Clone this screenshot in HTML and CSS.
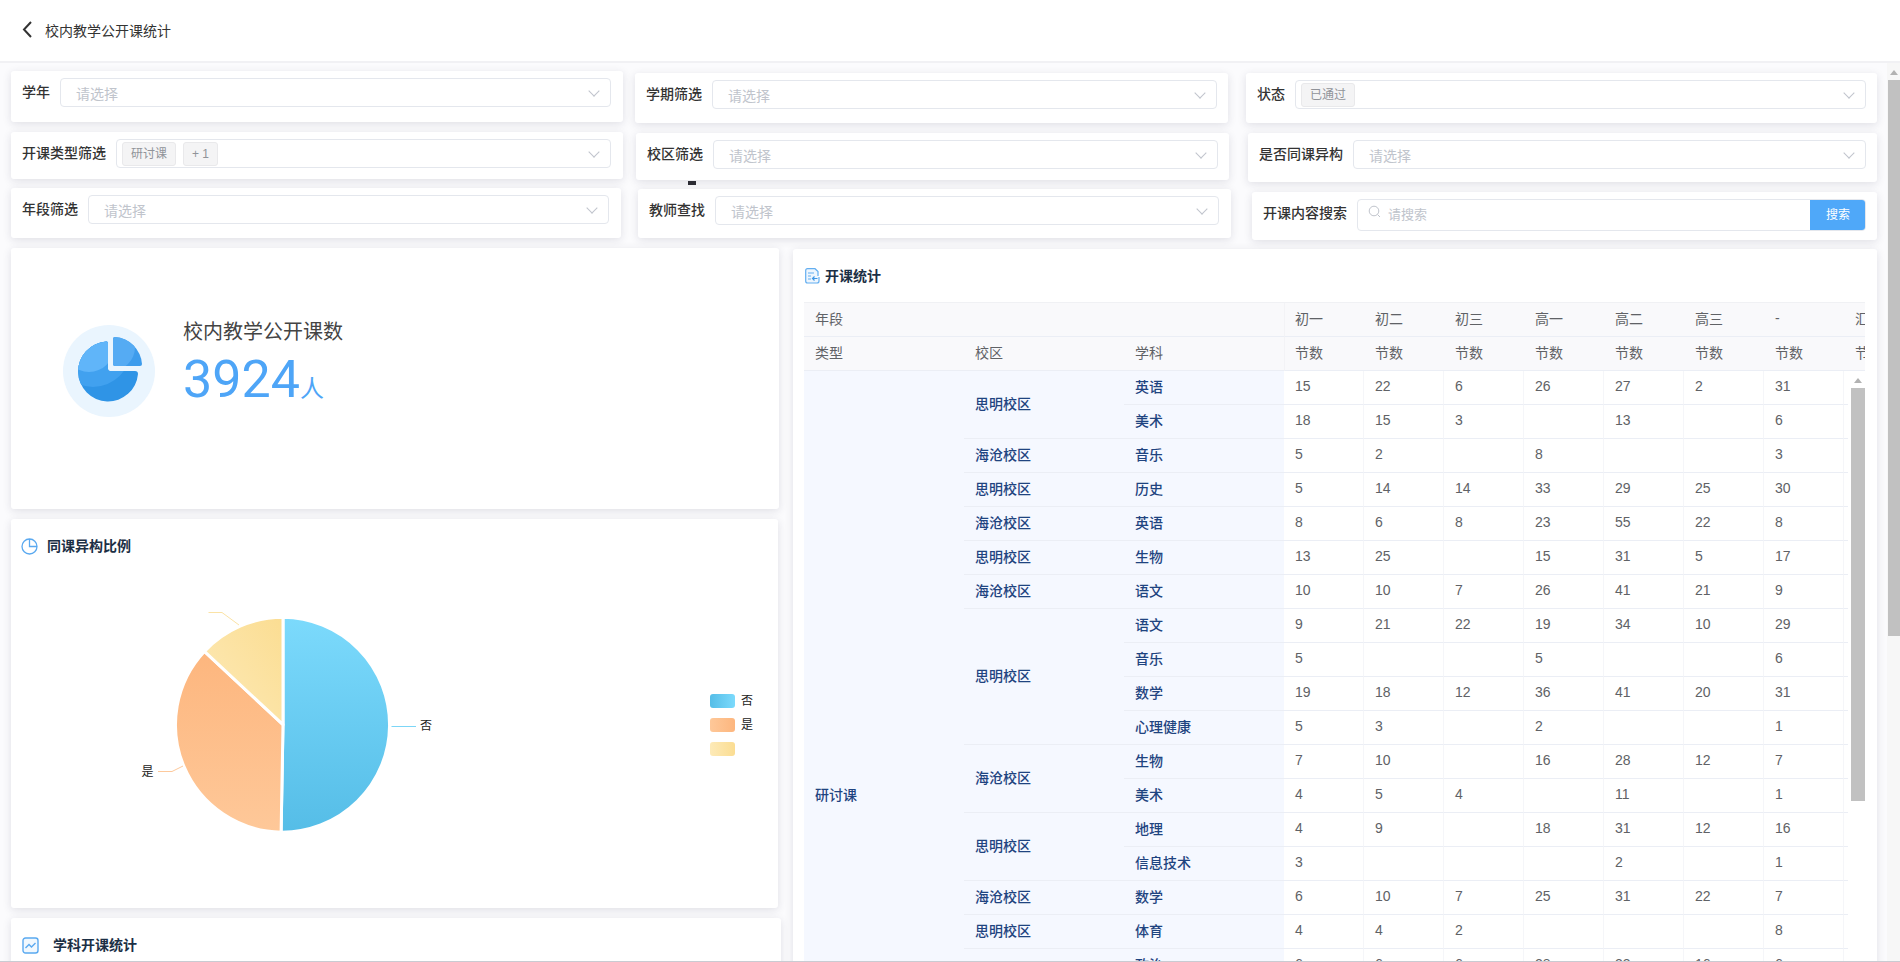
FILE: index.html
```html
<!DOCTYPE html>
<html lang="zh-CN">
<head>
    <meta charset="UTF-8">
    <title>校内教学公开课统计</title>
    <link rel="stylesheet" href="styles.css">
</head>
<body>
<div class="page">
    <div class="top-bar">
        <svg class="back-icon" width="10" height="17" viewBox="0 0 10 17"><path d="M9 1 L2 8.5 L9 16" fill="none" stroke="#333" stroke-width="2"/></svg>
        <span>校内教学公开课统计</span>
    </div>
    <div class="page-body">
        <div class="content">
            <!-- 筛选 -->
            <div class="filters">
                <div class="col col-1">
                    <div class="filter">
                        <span class="filter-label">学年</span>
                        <div class="select"><span class="placeholder">请选择</span><i class="arrow"></i></div>
                    </div>
                    <div class="filter">
                        <span class="filter-label">开课类型筛选</span>
                        <div class="select"><span class="tag">研讨课</span><span class="tag">+ 1</span><i class="arrow"></i></div>
                    </div>
                    <div class="filter">
                        <span class="filter-label">年段筛选</span>
                        <div class="select"><span class="placeholder">请选择</span><i class="arrow"></i></div>
                    </div>
                </div>
                <div class="col col-2">
                    <div class="filter">
                        <span class="filter-label">学期筛选</span>
                        <div class="select"><span class="placeholder">请选择</span><i class="arrow"></i></div>
                    </div>
                    <div class="filter">
                        <span class="filter-label">校区筛选</span>
                        <div class="select"><span class="placeholder">请选择</span><i class="arrow"></i></div>
                    </div>
                    <div class="filter">
                        <span class="filter-label">教师查找</span>
                        <div class="select"><span class="placeholder">请选择</span><i class="arrow"></i></div>
                    </div>
                </div>
                <div class="col col-3">
                    <div class="filter">
                        <span class="filter-label">状态</span>
                        <div class="select"><span class="tag">已通过</span><i class="arrow"></i></div>
                    </div>
                    <div class="filter">
                        <span class="filter-label">是否同课异构</span>
                        <div class="select"><span class="placeholder">请选择</span><i class="arrow"></i></div>
                    </div>
                    <div class="filter">
                        <span class="filter-label">开课内容搜索</span>
                        <div class="search">
                            <svg class="search-icon" width="13" height="13" viewBox="0 0 13 13"><circle cx="6" cy="6" r="4.8" fill="none" stroke="#c0c4cc"/><path d="M9.5 9.5 L12 12" stroke="#c0c4cc"/></svg>
                            <span class="search-text">请搜索</span>
                            <div class="search-btn">搜索</div>
                        </div>
                    </div>
                </div>
            </div>

            <div class="main">
                <div class="left">
                    <div class="card stat-card">
                        <svg class="stat-icon" width="92" height="92" viewBox="0 0 92 92">
                            <defs>
                                <clipPath id="bigPie"><path d="M43 16.5 A30 30 0 1 0 75 49 Q75 46 72 46 H47 Q45 46 45 44 V18 Q45 16 43 16.5 Z"/></clipPath>
                                <clipPath id="smallPie"><path d="M50 14 Q50 12 52 12 A29 29 0 0 1 79 39 Q79 41 77 41 H52 Q50 41 50 39 Z"/></clipPath>
                            </defs>
                            <circle cx="46" cy="46" r="46" fill="#eaf5fe"/>
                            <g clip-path="url(#bigPie)">
                                <rect x="10" y="10" width="70" height="70" fill="#2f94e6"/>
                                <circle cx="30" cy="24" r="38" fill="#41a1ef"/>
                                <circle cx="26" cy="22" r="25" fill="#60b5f9"/>
                            </g>
                            <g clip-path="url(#smallPie)">
                                <rect x="48" y="10" width="34" height="34" fill="#3d9cec"/>
                                <circle cx="48" cy="22" r="24" fill="#55abf3"/>
                            </g>
                        </svg>
                        <div class="stat-text">
                            <div class="stat-title">校内教学公开课数</div>
                            <div class="stat-num">3924<span class="stat-unit">人</span></div>
                        </div>
                    </div>

                    <div class="card pie-card">
                        <div class="card-title">
                            <svg width="17" height="17" viewBox="0 0 17 17"><circle cx="8.5" cy="8.5" r="7.5" fill="none" stroke="#5aa9f0" stroke-width="1.3"/><path d="M8.5 1 V8.5 H16" fill="none" stroke="#5aa9f0" stroke-width="1.3"/></svg>
                            <span>同课异构比例</span>
                        </div>
                        <svg class="pie-chart" width="767" height="335" viewBox="11 573 767 335">
                            <defs>
                                <linearGradient id="gBlue" x1="0" y1="0" x2="0" y2="1"><stop offset="0" stop-color="#7cdafc"/><stop offset="1" stop-color="#55bde7"/></linearGradient>
                                <linearGradient id="gOrange" x1="0" y1="0" x2="0" y2="1"><stop offset="0" stop-color="#fdb67e"/><stop offset="1" stop-color="#fec899"/></linearGradient>
                                <linearGradient id="gYellow" x1="1" y1="0" x2="0" y2="1"><stop offset="0" stop-color="#fbdd92"/><stop offset="1" stop-color="#fdeab8"/></linearGradient>
                                <linearGradient id="lBlue"><stop offset="0" stop-color="#55bde7"/><stop offset="1" stop-color="#7cdafc"/></linearGradient>
                                <linearGradient id="lOrange"><stop offset="0" stop-color="#fec899"/><stop offset="1" stop-color="#fdb67e"/></linearGradient>
                                <linearGradient id="lYellow"><stop offset="0" stop-color="#fdeab8"/><stop offset="1" stop-color="#fbdd92"/></linearGradient>
                            </defs>
                            <g stroke="#fff" stroke-width="3" stroke-linejoin="round">
                                <path d="M283 724.7 L283 617.2 A107.5 107.5 0 1 1 281.1 832.2 Z" fill="url(#gBlue)"/>
                                <path d="M283 724.7 L281.1 832.2 A107.5 107.5 0 0 1 204.4 651.4 Z" fill="url(#gOrange)"/>
                                <path d="M283 724.7 L204.4 651.4 A107.5 107.5 0 0 1 283 617.2 Z" fill="url(#gYellow)"/>
                            </g>
                            <g fill="none" stroke-width="1">
                                <path d="M391.5 726.5 H416" stroke="#7cd6f7"/>
                                <path d="M158 771.5 H172 L183 766" stroke="#fdc99c"/>
                                <path d="M208.5 612.5 H222 L239 625" stroke="#fbe3a6"/>
                            </g>
                            <text class="pie-label" x="420" y="730">否</text>
                            <text class="pie-label" x="141.5" y="776">是</text>
                            <rect x="710" y="694" width="25" height="14" rx="3" fill="url(#lBlue)"/>
                            <rect x="710" y="718" width="25" height="14" rx="3" fill="url(#lOrange)"/>
                            <rect x="710" y="742" width="25" height="14" rx="3" fill="url(#lYellow)"/>
                            <text class="pie-label" x="741" y="705">否</text>
                            <text class="pie-label" x="741" y="729">是</text>
                        </svg>
                    </div>

                    <div class="card subject-card">
                        <div class="card-title">
                            <svg width="17" height="17" viewBox="0 0 17 17"><rect x="1" y="1" width="15" height="15" rx="2.5" fill="#f1f8fe" stroke="#5aa9f0" stroke-width="1.4"/><path d="M3.5 11 L7 7.5 L9.5 10 L13.5 6" fill="none" stroke="#5aa9f0" stroke-width="1.4"/></svg>
                            <span>学科开课统计</span>
                        </div>
                    </div>
                </div>

                <div class="card table-card">
                    <div class="card-title">
                        <svg width="15" height="16" viewBox="0 0 15 16"><path d="M2.5 .7 H10 L13 3.5 V8 M2.5 .7 Q.7 .7 .7 2.5 V13 Q.7 15 2.5 15 H12 Q14 15 14 13 V9" fill="#eef6fe" stroke="#63aef0" stroke-width="1.2"/><path d="M3 5 H9 M3 8 H6 M3 11 H6" stroke="#63aef0" stroke-width="1.1"/><path d="M12.5 10.5 H7.5 M9.5 8.5 L7.5 10.5 L9.5 12.5" fill="none" stroke="#3f97e6" stroke-width="1.2"/></svg>
                        <span>开课统计</span>
                    </div>
                    <div class="table-head">
                        <table>
                            <colgroup><col class="w160"><col class="w160"><col class="w160"><col class="w80"><col class="w80"><col class="w80"><col class="w80"><col class="w80"><col class="w80"><col class="w80"><col class="w80"></colgroup>
                            <tr><th colspan="3">年段</th><th class="first">初一</th><th>初二</th><th>初三</th><th>高一</th><th>高二</th><th>高三</th><th>-</th><th>汇总</th></tr>
                            <tr><th>类型</th><th>校区</th><th>学科</th><th class="first">节数</th><th>节数</th><th>节数</th><th>节数</th><th>节数</th><th>节数</th><th>节数</th><th>节数</th></tr>
                        </table>
                    </div>
                    <div class="table-body">
                        <div class="table-scroll">
                            <table>
                                <colgroup><col class="w160"><col class="w160"><col class="w160"><col class="w80"><col class="w80"><col class="w80"><col class="w80"><col class="w80"><col class="w80"><col class="w80"><col class="w80"></colgroup>
                                <tr><td class="fixed type" rowspan="18">研讨课</td><td class="fixed" rowspan="2">思明校区</td><td class="fixed">英语</td><td>15</td><td>22</td><td>6</td><td>26</td><td>27</td><td>2</td><td>31</td><td></td></tr>
                                <tr><td class="fixed">美术</td><td>18</td><td>15</td><td>3</td><td></td><td>13</td><td></td><td>6</td><td></td></tr>
                                <tr><td class="fixed">海沧校区</td><td class="fixed">音乐</td><td>5</td><td>2</td><td></td><td>8</td><td></td><td></td><td>3</td><td></td></tr>
                                <tr><td class="fixed">思明校区</td><td class="fixed">历史</td><td>5</td><td>14</td><td>14</td><td>33</td><td>29</td><td>25</td><td>30</td><td></td></tr>
                                <tr><td class="fixed">海沧校区</td><td class="fixed">英语</td><td>8</td><td>6</td><td>8</td><td>23</td><td>55</td><td>22</td><td>8</td><td></td></tr>
                                <tr><td class="fixed">思明校区</td><td class="fixed">生物</td><td>13</td><td>25</td><td></td><td>15</td><td>31</td><td>5</td><td>17</td><td></td></tr>
                                <tr><td class="fixed">海沧校区</td><td class="fixed">语文</td><td>10</td><td>10</td><td>7</td><td>26</td><td>41</td><td>21</td><td>9</td><td></td></tr>
                                <tr><td class="fixed" rowspan="4">思明校区</td><td class="fixed">语文</td><td>9</td><td>21</td><td>22</td><td>19</td><td>34</td><td>10</td><td>29</td><td></td></tr>
                                <tr><td class="fixed">音乐</td><td>5</td><td></td><td></td><td>5</td><td></td><td></td><td>6</td><td></td></tr>
                                <tr><td class="fixed">数学</td><td>19</td><td>18</td><td>12</td><td>36</td><td>41</td><td>20</td><td>31</td><td></td></tr>
                                <tr><td class="fixed">心理健康</td><td>5</td><td>3</td><td></td><td>2</td><td></td><td></td><td>1</td><td></td></tr>
                                <tr><td class="fixed" rowspan="2">海沧校区</td><td class="fixed">生物</td><td>7</td><td>10</td><td></td><td>16</td><td>28</td><td>12</td><td>7</td><td></td></tr>
                                <tr><td class="fixed">美术</td><td>4</td><td>5</td><td>4</td><td></td><td>11</td><td></td><td>1</td><td></td></tr>
                                <tr><td class="fixed" rowspan="2">思明校区</td><td class="fixed">地理</td><td>4</td><td>9</td><td></td><td>18</td><td>31</td><td>12</td><td>16</td><td></td></tr>
                                <tr><td class="fixed">信息技术</td><td>3</td><td></td><td></td><td></td><td>2</td><td></td><td>1</td><td></td></tr>
                                <tr><td class="fixed">海沧校区</td><td class="fixed">数学</td><td>6</td><td>10</td><td>7</td><td>25</td><td>31</td><td>22</td><td>7</td><td></td></tr>
                                <tr><td class="fixed">思明校区</td><td class="fixed">体育</td><td>4</td><td>4</td><td>2</td><td></td><td></td><td></td><td>8</td><td></td></tr>
                                <tr><td class="fixed"></td><td class="fixed">政治</td><td>6</td><td>6</td><td>6</td><td>28</td><td>33</td><td>16</td><td>6</td><td></td></tr>
                            </table>
                        </div>
                        <div class="inner-scrollbar"><i class="bar-up"></i><div class="inner-thumb"></div></div>
                    </div>
                </div>
            </div>
        </div>
        <div class="page-scrollbar"><i class="bar-up"></i><div class="page-thumb"></div></div>
    </div>
    <div class="bottom-line"></div>
    <div class="stray-mark"></div>
</div>
</body>
</html>
```

FILE: styles.css
```css
*{
    box-sizing: border-box;
}
html,body{
    margin: 0;
    height: 100%;
    overflow: hidden;
}
body{
    font-family: "Liberation Sans", "Noto Sans CJK SC", sans-serif;
    font-size: 14px;
    color: #333;
    background-color: #fff;
}
.page{
    position: relative;
    display: flex;
    flex-direction: column;
    height: 962px;
}
.top-bar{
    display: flex;
    align-items: center;
    flex: none;
    height: 63px;
    padding: 0 0 2px 22px;
    border-bottom: 2px solid #f1f1f4;
    background-color: #fff;
}
.back-icon{
    margin-right: 13px;
}
.page-body{
    display: flex;
    flex: none;
    height: 898px;
    overflow: hidden;
}
.content{
    flex: none;
    width: 1887px;
    padding: 8px 0 0 11px;
    background-color: #fbfbfd;
}
.page-scrollbar{
    flex: none;
    width: 13px;
    padding-left: 1px;
    background-color: #f7f7f7;
}
.bar-up{
    display: block;
    width: 0;
    height: 0;
    border-left: 4px solid transparent;
    border-right: 4px solid transparent;
    border-bottom: 5px solid #b2b2b2;
}
.page-scrollbar .bar-up{
    margin: 7px auto 5px;
}
.page-thumb{
    height: 556px;
    background-color: #c1c1c1;
}
.bottom-line{
    flex: none;
    height: 1px;
    background-color: #c9cbd2;
}
.stray-mark{
    position: absolute;
    left: 688px;
    top: 181px;
    width: 8px;
    height: 4px;
    background-color: #2b2b33;
}

/* 筛选 */
.filters{
    display: flex;
    height: 169px;
}
.col{
    display: flex;
    flex-direction: column;
    flex: none;
}
.col-1{
    width: 612px;
}
.col-2{
    width: 596px;
    margin: 2px 0 0 12px;
}
.col-3{
    width: 632px;
    margin: 2px 0 0 14px;
    align-items: flex-end;
}
.filter{
    display: flex;
    align-items: flex-start;
    padding: 7px 12px 0 11px;
    background-color: #fff;
    border-radius: 3px;
    box-shadow: 0 2px 8px rgba(40,40,70,.13);
}
.col-1 .filter:nth-child(1){ height: 51px; width: 612px; }
.col-1 .filter:nth-child(2){ height: 47px; width: 612px; margin-top: 10px; }
.col-1 .filter:nth-child(3){ height: 50px; width: 610px; margin-top: 9px; }
.col-2 .filter{ width: 593px; }
.col-2 .filter:nth-child(1){ height: 50px; padding-right: 11px; }
.col-2 .filter:nth-child(2){ height: 47px; margin: 10px 0 0 1px; padding-right: 11px; }
.col-2 .filter:nth-child(3){ height: 49px; margin: 9px 0 0 3px; }
.col-3 .filter{ padding-right: 11px; }
.col-3 .filter:nth-child(1){ height: 50px; width: 631px; }
.col-3 .filter:nth-child(2){ height: 49px; width: 629px; margin-top: 10px; }
.col-3 .filter:nth-child(3){ height: 48px; width: 625px; margin-top: 10px; }
.filter-label{
    flex: none;
    margin-right: 10px;
    line-height: 29px;
    font-weight: 500;
    color: #333;
}
.select{
    position: relative;
    display: flex;
    align-items: center;
    flex: 1;
    height: 29px;
    padding-left: 5px;
    background-color: #fff;
    border: 1px solid #e4e7ed;
    border-radius: 4px;
}
.placeholder{
    margin-left: 10px;
    color: #c0c4cc;
}
.tag{
    height: 24px;
    line-height: 22px;
    padding: 0 8px;
    margin-right: 7px;
    font-size: 12px;
    color: #909399;
    background-color: #f4f4f5;
    border: 1px solid #e9e9eb;
    border-radius: 3px;
}
.arrow{
    position: absolute;
    right: 12px;
    top: 8px;
    width: 8px;
    height: 8px;
    border-right: 1px solid #c0c4cc;
    border-bottom: 1px solid #c0c4cc;
    transform: rotate(45deg);
}
.search{
    display: flex;
    flex: 1;
    height: 32px;
    padding-left: 10px;
    border: 1px solid #e4e7ed;
    border-radius: 4px;
    overflow: hidden;
}
.search-icon{
    margin: 5px 7px 0 0;
}
.search-text{
    flex: 1;
    font-size: 13px;
    line-height: 29px;
    color: #c0c4cc;
}
.search-btn{
    width: 56px;
    margin: -1px -1px -1px 0;
    font-size: 12px;
    line-height: 32px;
    text-align: center;
    color: #fff;
    background-color: #4fa8f9;
}

/* 主体 */
.main{
    display: flex;
    margin-top: 8px;
}
.left{
    flex: none;
    width: 768px;
}
.card{
    background-color: #fff;
    border-radius: 3px;
    box-shadow: 0 2px 8px rgba(40,40,70,.13);
}
.stat-card{
    display: flex;
    align-items: flex-start;
    height: 261px;
    padding: 70px 0 0 52px;
}
.stat-icon{
    margin: 7px 28px 0 0;
}
.stat-title{
    font-size: 20px;
    line-height: 28px;
    color: #444;
}
.stat-num{
    margin-top: 6px;
    font-family: Roboto, "Noto Sans CJK SC", sans-serif;
    font-size: 52px;
    font-weight: 400;
    line-height: 56px;
    color: #4ea5f7;
}
.stat-unit{
    font-size: 24px;
    font-weight: 400;
}
.card-title{
    display: flex;
    align-items: center;
    height: 18px;
    font-weight: 700;
    color: #1c2f45;
}
.card-title span{
    margin-top: -2px;
}
.pie-card{
    width: 767px;
    height: 389px;
    margin-top: 10px;
    padding-top: 18px;
}
.pie-card .card-title{
    padding-left: 10px;
}
.pie-card .card-title svg{
    margin-right: 9px;
}
.pie-chart{
    display: block;
    margin-top: 18px;
}
.pie-label{
    font-size: 12px;
    fill: #222;
}
.subject-card{
    width: 770px;
    height: 120px;
    margin-top: 10px;
    padding-top: 18px;
}
.subject-card .card-title{
    padding-left: 11px;
}
.subject-card .card-title svg{
    margin-right: 14px;
}
.table-card{
    flex: none;
    width: 1084px;
    height: 760px;
    margin: 1px 0 0 14px;
    padding: 18px 12px 0 11px;
}
.table-card .card-title{
    margin-bottom: 17px;
}
.table-card .card-title svg{
    margin-left: 1px;
    margin-right: 5px;
}

/* 表格 */
table{
    width: 1120px;
    table-layout: fixed;
    border-collapse: separate;
    border-spacing: 0;
}
.w160{
    width: 160px;
}
.w80{
    width: 80px;
}
.table-head{
    overflow: hidden;
    background-color: #f9f9fb;
    border-top: 1px solid #f0f1f4;
    margin-top: 0;
    height: 69px;
}
th{
    height: 34px;
    padding: 0 11px 4px;
    font-weight: 400;
    text-align: left;
    color: #606266;
    background-color: #f9f9fb;
    border-bottom: 1px solid #ebeef5;
    white-space: nowrap;
}
th.first{
    padding-left: 10px;
    border-left: 1px solid #f3f3f6;
}
.table-body{
    display: flex;
    height: 680px;
}
.table-scroll{
    flex: none;
    width: 1044px;
    overflow: hidden;
}
td{
    height: 34px;
    padding: 0 11px 4px;
    color: #606266;
    border-bottom: 1px solid #ebeef5;
    border-right: 1px solid #f5f6f9;
    white-space: nowrap;
}
td.fixed{
    font-weight: 500;
    color: #1f4480;
    background-color: #f5f8ff;
    border-right: 0;
}
td.type{
    padding-top: 414px;
    vertical-align: top;
    line-height: 20px;
}
.inner-scrollbar{
    flex: none;
    width: 17px;
    padding-left: 3px;
    background-color: #fff;
}
.inner-scrollbar .bar-up{
    margin: 7px auto 5px;
}
.inner-thumb{
    height: 413px;
    background-color: #c1c1c1;
}
```
